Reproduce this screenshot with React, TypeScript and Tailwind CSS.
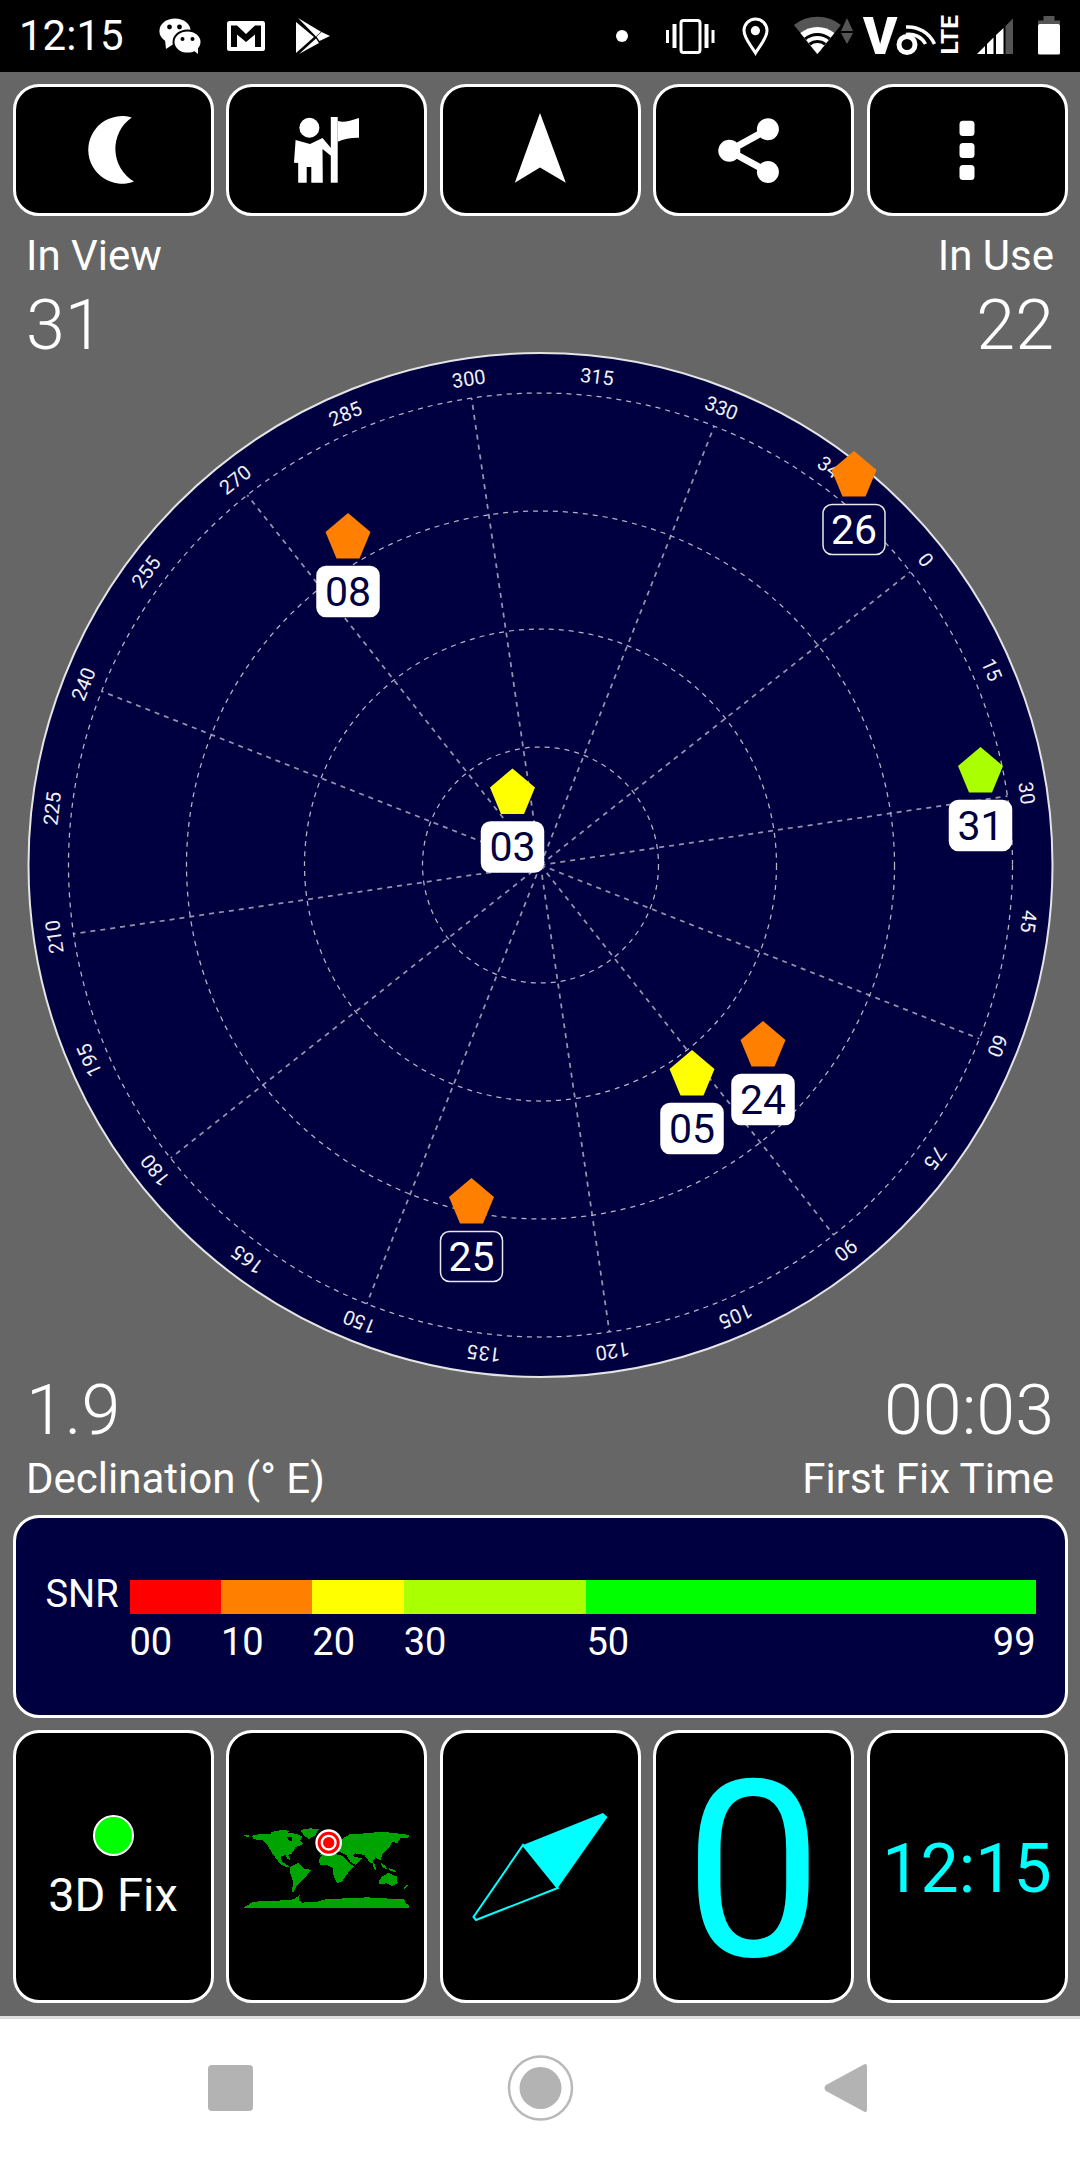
const navy = '#000040';

const sats = [
  { id: '08', x: 347.5, top: 513, color: '#ff8000', used: true },
  { id: '03', x: 512, top: 768.5, color: '#ffff00', used: true },
  { id: '26', x: 853.5, top: 451, color: '#ff8000', used: false },
  { id: '31', x: 980, top: 747, color: '#aaff00', used: true },
  { id: '25', x: 471, top: 1178, color: '#ff8000', used: false },
  { id: '05', x: 691.5, top: 1050, color: '#ffff00', used: true },
  { id: '24', x: 762.5, top: 1021, color: '#ff8000', used: true },
];

const bearing = 51.6;
const cx = 540;
const cy = 865;
const polar = (deg: number, r: number) => {
  const a = ((deg + bearing) * Math.PI) / 180;
  return { x: cx + r * Math.sin(a), y: cy - r * Math.cos(a) };
};

const wedge = (r: number) => {
  const dx = (r * 0.63).toFixed(1);
  const dy = (r * 0.777).toFixed(1);
  return `M817.4 54 L${817.4 - Number(dx)} ${54 - Number(dy)} A${r} ${r} 0 0 1 ${817.4 + Number(dx)} ${54 - Number(dy)} Z`;
};

const StatusLeft = () => (
  <svg className="ml-[29px] block h-[72px] w-[190px]" viewBox="152 0 190 72">
    <ellipse cx="174" cy="31" rx="15.6" ry="12.6" fill="#fff" />
    <path d="M164 40 L165 49 L174 43 Z" fill="#fff" />
    <circle cx="168.5" cy="27" r="2.4" fill="#000" />
    <circle cx="178.5" cy="27" r="2.4" fill="#000" />
    <ellipse cx="186.5" cy="42" rx="14" ry="11.6" fill="#fff" stroke="#000" strokeWidth="2" />
    <path d="M192 50 L197 54 L197 46 Z" fill="#fff" />
    <circle cx="181.5" cy="39" r="2" fill="#000" />
    <circle cx="191.5" cy="39" r="2" fill="#000" />
    <rect x="226" y="21" width="38" height="30" rx="2.5" fill="#fff" />
    <path d="M230 25.5 L236 25.5 L245 34 L254 25.5 L260 25.5 L260 47 L254 47 L254 34.5 L245 42 L236 34.5 L236 47 L230 47 Z" fill="#000" />
    <path d="M295 22 L313 37 L295 53 Z" fill="#fff" />
    <path d="M297 18 L320 31.7 L315 36.5 Z" fill="#fff" />
    <path d="M320.5 32 L329 36 L318.5 41 L315.5 36.8 Z" fill="#fff" />
    <path d="M298 54 L315 38.5 L318 43 Z" fill="#fff" />
  </svg>
);

const StatusRight = () => (
  <svg className="block h-[72px] w-[470px]" viewBox="610 0 470 72">
    <circle cx="622" cy="36" r="6" fill="#fff" />
    <rect x="681" y="20.5" width="19" height="32" rx="2.5" fill="none" stroke="#fff" strokeWidth="3" />
    <rect x="666" y="30" width="3" height="13" fill="#fff" />
    <rect x="672.5" y="24" width="4" height="24" fill="#fff" />
    <rect x="704.5" y="24" width="4" height="24" fill="#fff" />
    <rect x="711.5" y="30" width="3" height="13" fill="#fff" />
    <path d="M755.5 53 C750 44 744 38 744 30.5 A11.5 11.5 0 0 1 767 30.5 C767 38 761 44 755.5 53 Z" fill="none" stroke="#fff" strokeWidth="3" />
    <circle cx="755.4" cy="30.7" r="4.6" fill="#fff" />
    <path d={wedge(37.3)} fill="#555" />
    <path d={wedge(27)} fill="#fff" />
    <path d={wedge(21)} fill="#000" />
    <path d={wedge(18)} fill="#fff" />
    <path d={wedge(14)} fill="#000" />
    <path d={wedge(11)} fill="#fff" />
    <path d="M847 18 L853 31 L841 31 Z" fill="#555" />
    <path d="M847 44 L853 33 L841 33 Z" fill="#555" />
    <text x="863" y="54" fontSize="52" fontWeight="900" fill="#fff">V</text>
    <circle cx="907" cy="44.5" r="8" fill="none" stroke="#fff" strokeWidth="5" />
    <path d="M906 27 A29 29 0 0 1 934.5 44" fill="none" stroke="#fff" strokeWidth="3.5" />
    <path d="M906 34.5 A19 19 0 0 1 925.5 44" fill="none" stroke="#fff" strokeWidth="3.5" />
    <text transform="translate(957.5 54.5) rotate(-90)" fontSize="24.5" fontWeight="700" fill="#fff">LTE</text>
    <path d="M977 54 L985 46 L985 54 Z" fill="#fff" />
    <path d="M987 44 L993.5 37.5 L993.5 54 L987 54 Z" fill="#fff" />
    <path d="M996 35 L1003.5 28 L1003.5 54 L996 54 Z" fill="#fff" />
    <path d="M1005.5 26 L1013 18.5 L1013 54 L1005.5 54 Z" fill="#555" />
    <path d="M1043.5 16 L1054.5 16 L1054.5 20.5 L1060 20.5 L1060 24 L1038 24 L1038 20.5 L1043.5 20.5 Z" fill="#555" />
    <rect x="1038" y="24" width="22" height="30.5" rx="1.5" fill="#fff" />
  </svg>
);

const Moon = () => (
  <svg className="h-[80px] w-[80px]" viewBox="-1.4 0 80 80">
    <path d="M57.4 7.5 A33.8 33.8 0 1 0 59.6 71.5 A38 38 0 0 1 57.4 7.5 Z" fill="#fff" />
  </svg>
);

const Explorer = () => (
  <svg className="h-[80px] w-[80px]" viewBox="0 0 80 80">
    <circle cx="22.4" cy="17.7" r="10" fill="#fff" />
    <path d="M8.6 30 L23 34 L35.5 28 L44 38 L44.2 46 L35.5 39 L35.8 72.7 L24.3 72.7 L24.3 57 L19.7 57 L19.7 72.7 L11.2 72.7 L11.2 53 L7 52.7 Z" fill="#fff" />
    <rect x="43.8" y="7" width="6.9" height="65.7" fill="#fff" />
    <path d="M50.7 10.7 C56 13 62 11 72 8 L72 27.7 C64 27.5 57 29 50.7 31.7 Z" fill="#fff" />
  </svg>
);

const Arrow = () => (
  <svg className="h-[80px] w-[80px]" viewBox="0 0 80 80">
    <path d="M40 3 L65.8 72.7 L40 57.5 L14.8 72.7 Z" fill="#fff" />
  </svg>
);

const Share = () => (
  <svg className="h-[80px] w-[80px]" viewBox="0 0 80 80">
    <path d="M53.9 19.3 L15.3 40.7 L53.9 62" fill="none" stroke="#fff" strokeWidth="7" />
    <circle cx="53.9" cy="19.3" r="11" fill="#fff" />
    <circle cx="15.3" cy="40.7" r="11" fill="#fff" />
    <circle cx="53.9" cy="62" r="11" fill="#fff" />
  </svg>
);

const Kebab = () => (
  <svg className="h-[80px] w-[80px]" viewBox="0 0 80 80">
    <rect x="32.5" y="10.7" width="15" height="15.3" rx="3.5" fill="#fff" />
    <rect x="32.5" y="33" width="15" height="15" rx="3.5" fill="#fff" />
    <rect x="32.5" y="55" width="15" height="15" rx="3.5" fill="#fff" />
  </svg>
);

const Dial = () => {
  const ticks = Array.from({ length: 24 }, (_, i) => i * 15);
  return (
    <svg className="mt-[-10px] block h-[1030px] w-[1055px]" viewBox="12.5 350 1055 1030">
      <circle cx={cx} cy={cy} r="512" fill={navy} stroke="#e4e4e4" strokeWidth="2" />
      {ticks.filter((t) => t % 30 === 0).map((t) => {
        const end = polar(t, 472);
        return <line key={t} x1={cx} y1={cy} x2={end.x} y2={end.y} stroke="#9494ac" strokeWidth="1.75" strokeDasharray="5 5" />;
      })}
      {[118, 236, 354, 472].map((r) => (
        <circle key={r} cx={cx} cy={cy} r={r} fill="none" stroke="#b4b4c4" strokeWidth="1.25" strokeDasharray="5 5" />
      ))}
      {ticks.map((t) => {
        const p = polar(t, 491.5);
        return (
          <text
            key={t}
            x={p.x}
            y={p.y}
            fontSize="20"
            fill="#f0f0f4"
            textAnchor="middle"
            dominantBaseline="central"
            transform={`rotate(${t + bearing} ${p.x} ${p.y})`}
          >
            {t}
          </text>
        );
      })}
      {sats.map((s) => (
        <g key={s.id}>
          <path
            d={`M${s.x} ${s.top} L${s.x + 22.5} ${s.top + 19} L${s.x + 11.5} ${s.top + 45.5} L${s.x - 11.5} ${s.top + 45.5} L${s.x - 22.5} ${s.top + 19} Z`}
            fill={s.color}
          />
          <rect
            x={s.x - 31}
            y={s.top + 53.5}
            width="62"
            height="50"
            rx="9"
            fill={s.used ? '#fff' : navy}
            stroke={s.used ? '#fff' : '#e8e8e8'}
            strokeWidth="1.5"
          />
          <text x={s.x} y={s.top + 92.5} fontSize="41" textAnchor="middle" fill={s.used ? navy : '#fff'}>
            {s.id}
          </text>
        </g>
      ))}
    </svg>
  );
};

const WorldMap = () => (
  <svg className="h-[95px] w-[180px]" viewBox="-10 -3 540 285" shapeRendering="crispEdges">
    <g fill="#00a400">
      <path d="M10 45 L25 46 L25 50 L10 49 Z" />
      <path d="M35 47 L60 42 L90 42 L100 37 L130 36 L170 42 L185 50 L180 62 L190 72 L165 82 L155 100 L143 105 L150 120 L143 118 L135 105 L120 110 L125 125 L147 140 L140 143 L120 132 L105 112 L95 100 L82 75 L65 60 L40 58 Z" />
      <path d="M140 52 L155 50 L156 62 L146 62 Z" fill="#000" />
      <path d="M85 40 L110 32 L135 30 L150 36 L130 40 Z" />
      <path d="M180 30 L210 25 L235 28 L225 45 L205 58 L190 45 Z" />
      <path d="M150 140 L175 128 L190 145 L212 150 L200 165 L185 180 L170 195 L160 217 L155 215 L158 185 L148 155 Z" />
      <path d="M235 120 L245 105 L270 100 L300 105 L312 112 L325 128 L342 140 L330 150 L318 165 L305 185 L290 190 L280 170 L278 145 L262 135 L240 135 Z" />
      <path d="M238 105 L250 92 L265 98 L275 80 L300 60 L330 42 L380 40 L420 35 L470 40 L507 45 L507 52 L480 55 L470 70 L455 65 L445 85 L425 105 L420 122 L405 112 L392 132 L372 105 L345 100 L335 108 L365 115 L345 135 L330 125 L318 105 L300 96 L270 100 Z" />
      <path d="M395 125 L402 130 L408 150 L402 148 Z" />
      <path d="M420 128 L435 138 L442 148 L428 143 Z" />
      <path d="M445 144 L466 152 L466 157 L448 152 Z" />
      <path d="M415 185 L425 170 L445 158 L458 165 L470 170 L472 190 L455 198 L440 190 L418 192 Z" />
      <path d="M490 205 L500 195 L503 198 L494 206 Z" />
      <path d="M10 262 L40 245 L100 243 L160 238 L178 225 L175 240 L185 248 L230 245 L260 237 L320 235 L380 232 L430 235 L492 238 L495 250 L507 255 L507 264 L10 264 Z" />
    </g>
    <g shapeRendering="auto">
      <circle cx="265" cy="68" r="40" fill="#fff" />
      <circle cx="265" cy="68" r="33" fill="#f00" />
      <circle cx="265" cy="68" r="24" fill="#fff" />
      <circle cx="265" cy="68" r="17" fill="#f00" />
    </g>
  </svg>
);

const Compass = () => (
  <svg className="h-[120px] w-[150px]" viewBox="465 1807 150 120">
    <path d="M523 1845 L603 1813 L607.5 1817 L557.7 1888 Z" fill="#00ffff" />
    <path d="M523 1845 L557.7 1888 L476 1920 L473.5 1917 Z" fill="none" stroke="#00ffff" strokeWidth="2" />
  </svg>
);

const Tile = ({ children, className = '' }: { children?: React.ReactNode; className?: string }) => (
  <div className={`flex items-center justify-center rounded-[26px] border-[3px] border-white bg-black ${className}`}>
    {children}
  </div>
);

const Stat = ({ label, value, right = false }: { label: string; value: string; right?: boolean }) => (
  <div className={right ? 'text-right' : ''}>
    <div className="text-[42px] leading-none">{label}</div>
    <div className="mt-[13px] text-[70px] leading-none font-[350]">{value}</div>
  </div>
);

export default function App() {
  return (
    <div className="flex h-[2160px] w-[1080px] flex-col overflow-hidden bg-[#666666] font-['Roboto',sans-serif] text-white">
      <div className="flex h-[72px] shrink-0 items-center bg-black pl-[19px]">
        <span className="w-[105px] text-[42px] leading-none">12:15</span>
        <StatusLeft />
        <div className="flex-1" />
        <StatusRight />
      </div>

      <div className="flex flex-1 flex-col px-[12.5px]">
        <div className="mt-[12px] grid h-[132px] grid-cols-5 gap-[12.5px]">
          <Tile><Moon /></Tile>
          <Tile><Explorer /></Tile>
          <Tile><Arrow /></Tile>
          <Tile><Share /></Tile>
          <Tile><Kebab /></Tile>
        </div>

        <div className="mt-[19px] flex justify-between px-[13.5px]">
          <Stat label="In View" value="31" />
          <Stat label="In Use" value="22" right />
        </div>

        <Dial />

        <div className="mt-[-5px] flex justify-between px-[13.5px]">
          <div>
            <div className="text-[70px] leading-none font-[350]">1.9</div>
            <div className="mt-[13px] text-[42px] leading-none">Declination (° E)</div>
          </div>
          <div className="text-right">
            <div className="text-[70px] leading-none font-[350]">00:03</div>
            <div className="mt-[13px] text-[42px] leading-none">First Fix Time</div>
          </div>
        </div>

        <div className="mt-[15px] h-[203px] rounded-[26px] border-[3px] border-white bg-[#000040] pt-[56.5px] pr-[29px] pl-[30px] text-[38px] leading-none">
          <div className="flex items-center">
            <span className="w-[84px] pr-[13px] pb-[6px] text-right">SNR</span>
            <div className="flex h-[34px] flex-1">
              <div className="w-[91.4px] bg-[#ff0000]" />
              <div className="w-[91.4px] bg-[#ff8000]" />
              <div className="w-[91.4px] bg-[#ffff00]" />
              <div className="w-[182.8px] bg-[#aaff00]" />
              <div className="flex-1 bg-[#00ff00]" />
            </div>
          </div>
          <div className="mt-[4.5px] ml-[84px] flex">
            <span className="w-[91.4px]">00</span>
            <span className="w-[91.4px]">10</span>
            <span className="w-[91.4px]">20</span>
            <span className="w-[182.8px]">30</span>
            <span className="flex flex-1 justify-between">
              <span>50</span>
              <span>99</span>
            </span>
          </div>
        </div>

        <div className="mt-[12px] grid h-[273px] grid-cols-5 gap-[12.5px]">
          <Tile className="flex-col">
            <div className="mb-[8px] h-[41px] w-[41px] rounded-full border-2 border-white bg-[#00ff00]" />
            <div className="mt-[7px] text-[47px] leading-none">3D Fix</div>
          </Tile>
          <Tile><WorldMap /></Tile>
          <Tile><Compass /></Tile>
          <Tile>
            <span className="pt-[10px] text-[246px] leading-none text-[#00ffff]">0</span>
          </Tile>
          <Tile>
            <span className="pt-[4px] text-[68px] leading-none text-[#00ffff]">12:15</span>
          </Tile>
        </div>
      </div>

      <div className="h-[144px] shrink-0 border-t-[3px] border-[#dddddd] bg-white">
        <svg className="block h-[141px] w-[1080px]" viewBox="0 2019 1080 141">
          <rect x="208" y="2065" width="45" height="46" rx="4" fill="#b3b3b3" />
          <circle cx="540.5" cy="2088" r="31.5" fill="none" stroke="#b9b9b9" strokeWidth="2.5" />
          <circle cx="540.5" cy="2088" r="21" fill="#b3b3b3" />
          <path d="M863 2065 Q867 2062 867 2067 L867 2109 Q867 2114 863 2111 L826 2091 Q823 2088 826 2085 Z" fill="#b3b3b3" />
        </svg>
      </div>
    </div>
  );
}
